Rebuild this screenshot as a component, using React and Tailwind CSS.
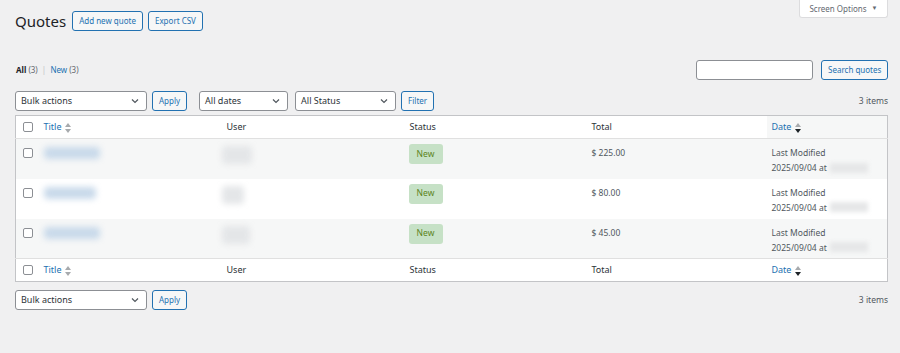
import React from "react";

const rows = [
  { total: "$ 225.00", tw: "w-[56px]", uw: "w-[30px]" },
  { total: "$ 80.00", tw: "w-[52px]", uw: "w-[22px]" },
  { total: "$ 45.00", tw: "w-[56px]", uw: "w-[28px]" },
];

const SortIcon = ({ active }) => (
  <svg width="6" height="10" viewBox="0 0 6 10" className="ml-[4px] inline-block">
    <path d="M0 4 L3 0 L6 4 Z" fill="#a7aaad" />
    <path d="M0 6 L3 10 L6 6 Z" fill={active ? "#1d2327" : "#a7aaad"} />
  </svg>
);

const Chevron = () => (
  <svg width="8" height="6" viewBox="0 0 8 6" fill="none">
    <path d="M1 1.5 L4 4.5 L7 1.5" stroke="#50575e" strokeWidth="1.2" />
  </svg>
);

const Select = ({ label, className }) => (
  <div
    className={`flex h-[20px] items-center justify-between rounded-[3px] border border-[#8c8f94] bg-white pl-[5px] pr-[7px] text-[9px] text-[#2c3338] ${className}`}
  >
    <span>{label}</span>
    <Chevron />
  </div>
);

const Button = ({ children, className = "" }) => (
  <button
    className={`h-[20px] whitespace-nowrap rounded-[3px] border border-[#2271b1] bg-[#f6f7f7] px-[6px] text-[8px] text-[#2271b1] ${className}`}
  >
    {children}
  </button>
);

const Checkbox = () => (
  <div className="h-[10px] w-[10px] rounded-[2px] border border-[#8c8f94] bg-white" />
);

const HeaderRow = ({ top }) => (
  <tr className={`h-[23px] text-[9px] text-[#2c3338] ${top ? "border-b" : "border-t"} border-[#e0e0e0]`}>
    <td className="pl-[7px] align-middle">
      <Checkbox />
    </td>
    <td className="pl-[5px] text-[#2271b1]">
      Title
      <SortIcon />
    </td>
    <td className="pl-[5px]">User</td>
    <td className="pl-[5px]">Status</td>
    <td className="pl-[5px]">Total</td>
    <td className={`pl-[5px] text-[#2271b1] ${top ? "bg-[#f6f7f7]" : ""}`}>
      Date
      <SortIcon active />
    </td>
  </tr>
);

export default function App() {
  return (
    <div className="min-h-[353px] bg-[#f0f0f1] pl-[15px] pr-[12px] font-['Noto_Sans',sans-serif]">
      <div className="flex items-start justify-between">
        <div className="mt-[11px] flex items-center">
          <h1 className="mr-[6px] text-[15px] leading-[20px] text-[#1d2327]">Quotes</h1>
          <Button className="mr-[5px] px-[5px]">Add new quote</Button>
          <Button className="px-[6px]">Export CSV</Button>
        </div>
        <div className="flex h-[18px] w-[89px] items-center justify-center rounded-b-[3px] border border-t-0 border-[#dcdcde] bg-white text-[8px] text-[#646970]">
          Screen Options
          <span className="ml-[5px] text-[6px]">▼</span>
        </div>
      </div>

      <div className="mt-[29px] flex items-center justify-between">
        <div className="pl-[1px] text-[8px] text-[#646970]">
          <span className="font-bold text-[#1d2327]">All</span> (3) <span className="mx-[2px] text-[#c3c4c7]">|</span>{" "}
          <span className="text-[#2271b1]">New</span> (3)
        </div>
        <div className="flex items-center">
          <div className="h-[20px] w-[117px] rounded-[3px] border border-[#8c8f94] bg-white" />
          <Button className="ml-[8px] w-[67px] px-0">Search quotes</Button>
        </div>
      </div>

      <div className="mt-[11px] flex items-center justify-between">
        <div className="flex items-center">
          <Select label="Bulk actions" className="w-[132px]" />
          <Button className="ml-[5px] px-[5px]">Apply</Button>
          <Select label="All dates" className="ml-[12px] w-[89px]" />
          <Select label="All Status" className="ml-[7px] w-[101px]" />
          <Button className="ml-[5px] px-[5px]">Filter</Button>
        </div>
        <span className="text-[8.5px] text-[#50575e]">3 items</span>
      </div>

      <table className="mt-[4px] w-full table-fixed border border-[#c3c4c7] bg-white">
        <colgroup>
          <col className="w-[23px]" />
          <col className="w-[183px]" />
          <col className="w-[183px]" />
          <col className="w-[182px]" />
          <col className="w-[180px]" />
          <col />
        </colgroup>
        <thead>
          <HeaderRow top />
        </thead>
        <tbody>
          {rows.map((r, i) => (
            <tr key={i} className={`h-[40px] align-top text-[8.5px] text-[#50575e] ${i % 2 === 0 ? "bg-[#f6f7f7]" : "bg-white"}`}>
              <td className="pl-[7px] pt-[9px]">
                <Checkbox />
              </td>
              <td className="pl-[5px] pt-[8px]">
                <div className={`h-[12px] ${r.tw} rounded-[4px] bg-[#c8d9ea] blur-[3px]`} />
              </td>
              <td className="pt-[7px]">
                <div className={`h-[18px] ${r.uw} rounded-[4px] bg-[#e4e6e8] blur-[3px]`} />
              </td>
              <td className="pl-[4px] pt-[5px]">
                <span className="inline-flex h-[20px] w-[34px] items-center justify-center rounded-[3px] bg-[#c6e1c6] text-[8.5px] text-[#5b841b]">
                  New
                </span>
              </td>
              <td className="pl-[5px] pt-[8px] leading-[12px]">{r.total}</td>
              <td className="pl-[5px] pt-[6px] leading-[15px]">
                <div>Last Modified</div>
                <div className="flex items-center">
                  2025/09/04 at
                  <span className="ml-[3px] inline-block h-[10px] w-[38px] bg-[#e6e7e8] blur-[2px]" />
                </div>
              </td>
            </tr>
          ))}
        </tbody>
        <tfoot>
          <HeaderRow />
        </tfoot>
      </table>

      <div className="mt-[8px] flex items-center justify-between">
        <div className="flex items-center">
          <Select label="Bulk actions" className="w-[132px]" />
          <Button className="ml-[5px] px-[5px]">Apply</Button>
        </div>
        <span className="text-[8.5px] text-[#50575e]">3 items</span>
      </div>
    </div>
  );
}
